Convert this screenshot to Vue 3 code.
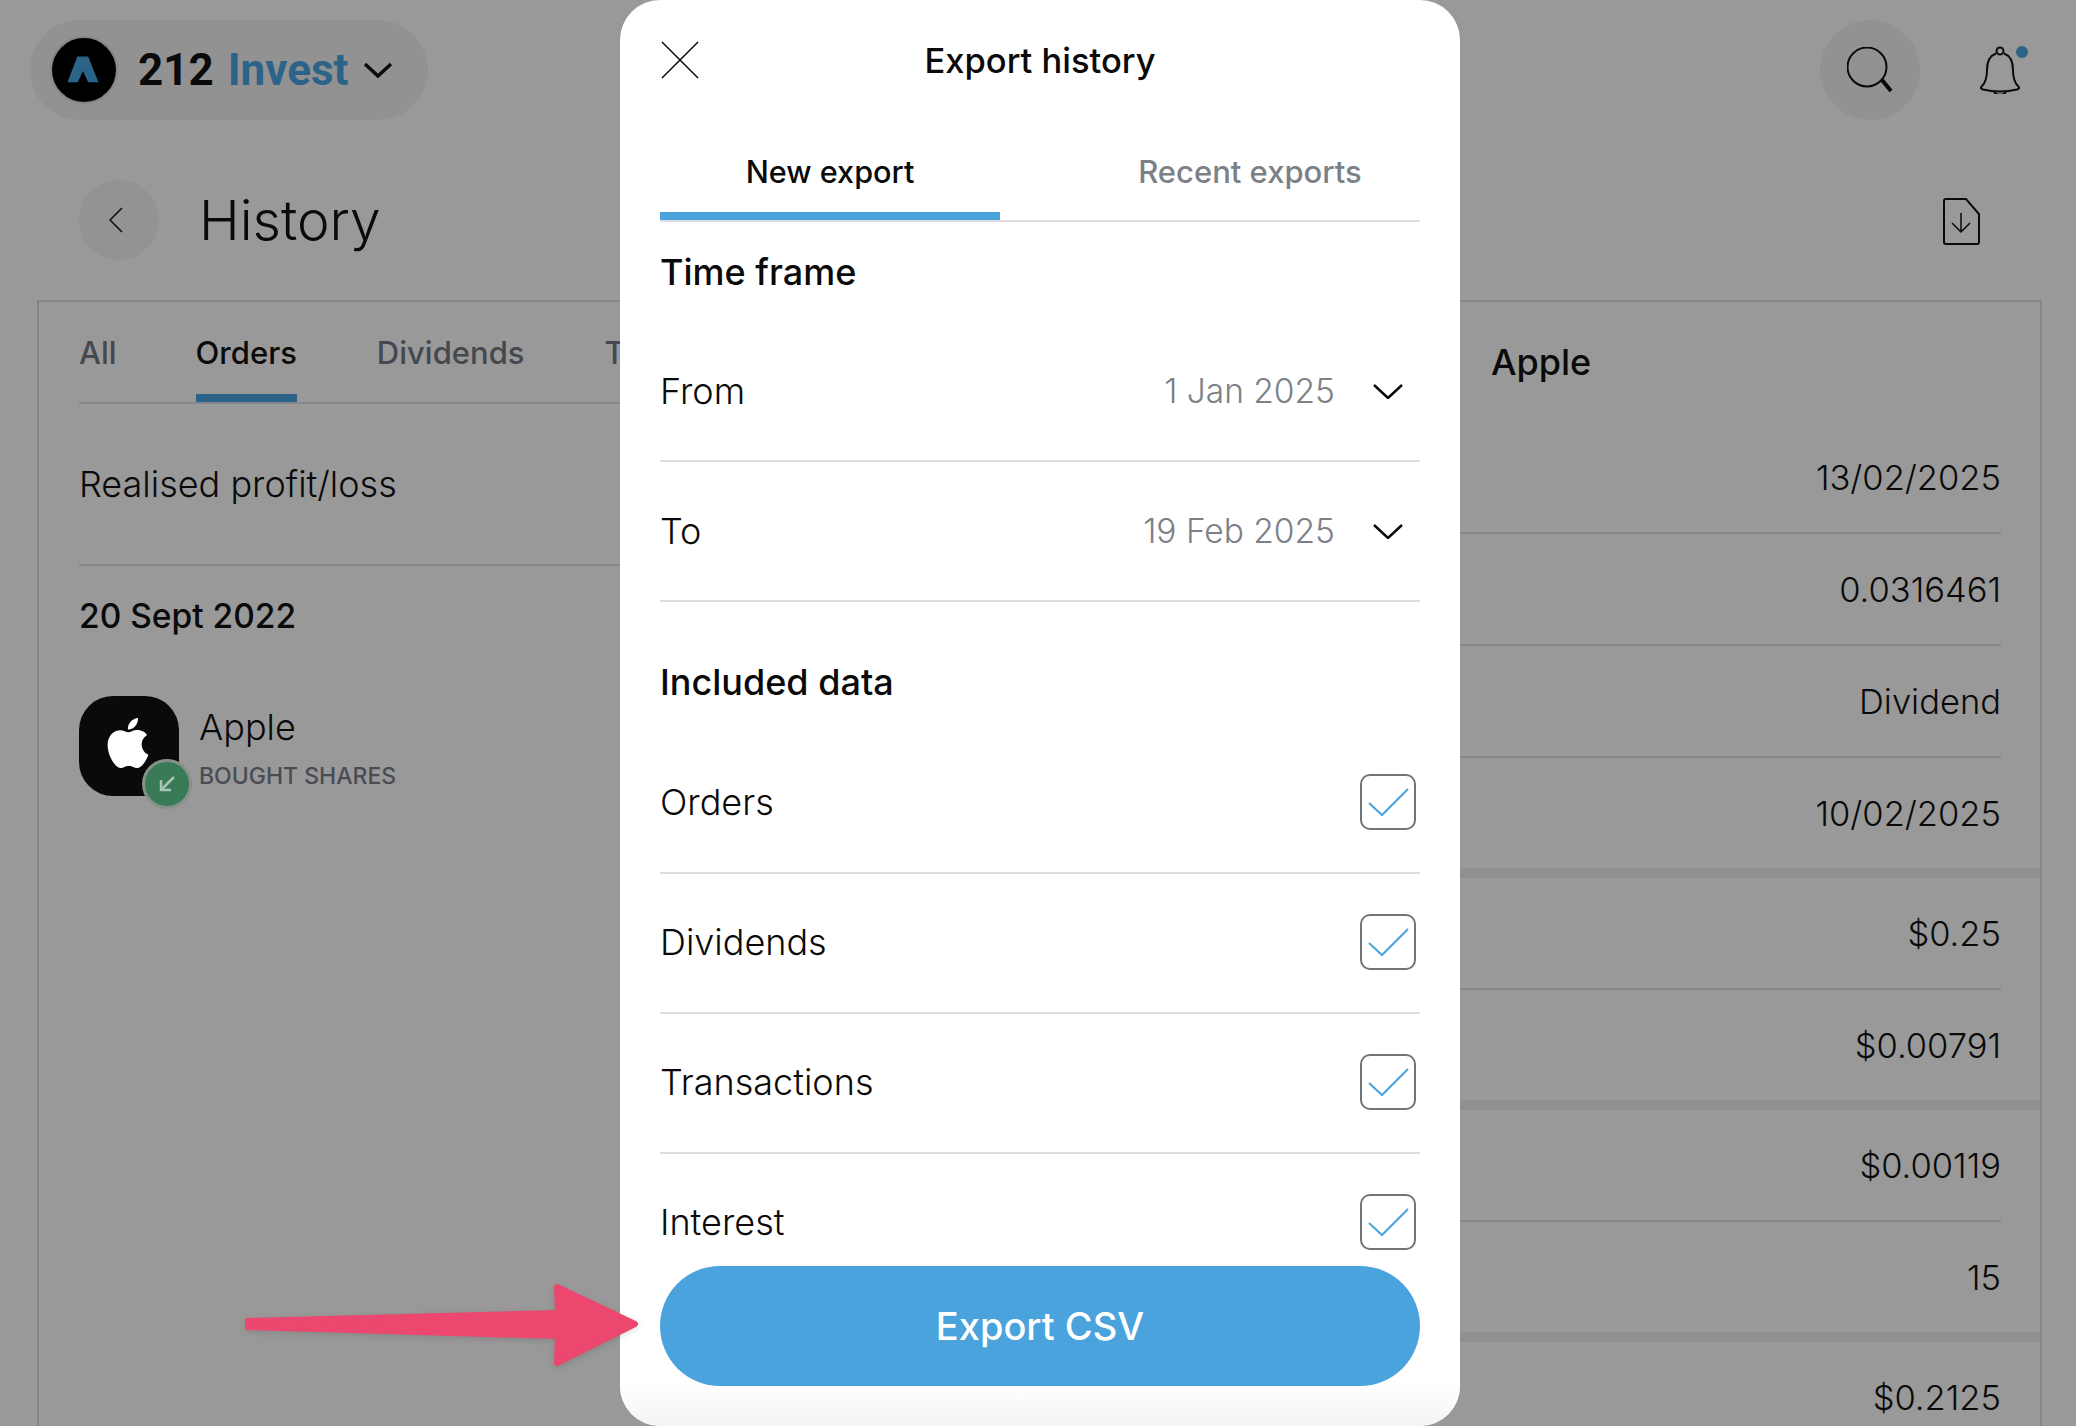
<script setup>
const timeRows = [
  { label: 'From', value: '1 Jan 2025' },
  { label: 'To', value: '19 Feb 2025' }
]
const dataRows = ['Orders', 'Dividends', 'Transactions', 'Interest']
const groups = [
  ['13/02/2025', '0.0316461', 'Dividend', '10/02/2025'],
  ['$0.25', '$0.00791'],
  ['$0.00119', '15'],
  ['$0.2125']
]
</script>

<template>
  <div class="page">
    <header class="topbar">
      <div class="brand">
        <svg class="logo" viewBox="0 0 66 66">
          <circle cx="33" cy="33" r="32" fill="#000" stroke="#85858d" stroke-width="2" />
          <path d="M26.500 20H37l10 25H37l-5-11-5 11H17z" fill="#2c6389" />
        </svg>
        <span class="brand-name">212 <em>Invest</em></span>
        <svg class="brand-chev" viewBox="0 0 30 16"><path d="M2 2l13 12L28 2" /></svg>
      </div>
      <div class="top-actions">
        <div class="search">
          <svg viewBox="0 0 46 46" width="46" height="46" fill="none" stroke="#0a0a0a">
            <circle cx="20" cy="20" r="19.500" stroke-width="2" />
            <path d="M35 33l9 11" stroke-width="4" />
          </svg>
        </div>
        <div class="bell">
          <svg viewBox="0 0 40 48" width="40" height="48" fill="none" stroke="#0a0a0a" stroke-width="2">
            <circle cx="20" cy="5" r="3.500" />
            <path d="M16 7.500C9 10 7 16 7 24c0 9-2 13-5 16-2 2-1 3 1 3.500 11 2.500 23 2.500 34 0 2-.5 3-1.500 1-3.500-3-3-5-7-5-16 0-8-2-14-9-16.500" />
            <path d="M14 45c1 5 11 5 12 0" />
          </svg>
          <i class="bell-dot"></i>
        </div>
      </div>
    </header>

    <div class="title-row">
      <div class="title-left">
        <button class="back">
          <svg viewBox="0 0 14 26" width="14" height="26"><path d="M13 1L1 13l12 12" /></svg>
        </button>
        <h1>History</h1>
      </div>
      <svg class="file-icon" viewBox="0 0 38 47" width="38" height="47" fill="none" stroke="#0a0a0a">
        <path d="M4 1h20l13 15v28a2 2 0 0 1-2 2H4a2 2 0 0 1-2-2V3a2 2 0 0 1 2-2z" stroke-width="2" />
        <path d="M19 15v19M10 25l9 9 9-9" stroke-width="1.500" />
      </svg>
    </div>

    <section class="panel">
      <div class="left-col">
        <nav class="tabs">
          <span>All</span>
          <span class="active">Orders</span>
          <span>Dividends</span>
          <span>Transactions</span>
        </nav>
        <div class="profit">Realised profit/loss</div>
        <div class="date">20 Sept 2022</div>
        <div class="stock">
          <div class="stock-icon">
            <svg class="apple" viewBox="0 0 24 24" width="50" height="50" fill="#fff">
              <path d="M12.152 6.896c-.948 0-2.415-1.078-3.960-1.040-2.040.027-3.910 1.183-4.961 3.014-2.117 3.675-.546 9.103 1.519 12.090 1.013 1.454 2.208 3.090 3.792 3.039 1.520-.065 2.090-.987 3.935-.987 1.831 0 2.350.987 3.960.948 1.637-.026 2.676-1.480 3.676-2.948 1.156-1.688 1.636-3.325 1.662-3.415-.039-.013-3.182-1.221-3.220-4.857-.026-3.040 2.480-4.494 2.597-4.559-1.429-2.090-3.623-2.324-4.390-2.376-2-.156-3.675 1.090-4.610 1.090zM15.530 3.830c.843-1.012 1.400-2.427 1.245-3.830-1.207.052-2.662.805-3.532 1.818-.780.896-1.454 2.338-1.273 3.714 1.338.104 2.715-.688 3.559-1.701" />
            </svg>
            <span class="badge">
              <svg viewBox="0 0 20 20" width="20" height="20" fill="none" stroke="#a9c4b3" stroke-width="2.500">
                <path d="M17 3L4 16M4 6v10h10" />
              </svg>
            </span>
          </div>
          <div class="stock-text">
            <div class="stock-name">Apple</div>
            <div class="stock-sub">BOUGHT SHARES</div>
          </div>
        </div>
      </div>

      <div class="right-col">
        <div class="right-head">Apple</div>
        <div v-for="(group, i) in groups" :key="i" class="group">
          <div v-for="val in group" :key="val" class="val-row">{{ val }}</div>
        </div>
      </div>
    </section>

    <div class="modal">
      <div class="modal-head">
        <svg class="close" viewBox="0 0 38 38" width="38" height="38"><path d="M1 1l36 36M37 1L1 37" /></svg>
        <h2>Export history</h2>
      </div>
      <div class="modal-tabs">
        <span class="on">New export</span>
        <span>Recent exports</span>
      </div>
      <div class="modal-body">
        <h3 class="time-head">Time frame</h3>
        <div v-for="row in timeRows" :key="row.label" class="row time-row">
          <span>{{ row.label }}</span>
          <div class="row-right">
            <span class="row-val">{{ row.value }}</span>
            <svg class="chev" viewBox="0 0 30 15" width="30" height="15"><path d="M1 1l14 13L29 1" /></svg>
          </div>
        </div>
        <h3 class="data-head">Included data</h3>
        <div v-for="name in dataRows" :key="name" class="row">
          <span>{{ name }}</span>
          <span class="check">
            <svg viewBox="0 0 56 56" width="56" height="56" fill="none">
              <rect x="1" y="1" width="54" height="54" rx="9" stroke="#70757a" stroke-width="2" />
              <path d="M9 29l13 12 26-26" stroke="#4aa3dc" stroke-width="2" />
            </svg>
          </span>
        </div>
      </div>
      <div class="modal-foot">
        <button class="export">Export CSV</button>
      </div>
    </div>

    <svg class="arrow" viewBox="0 0 410 100" width="410" height="100">
      <path d="M12 41L322 33 321 7 399 44 321 83 322 56 12 47z" fill="#ec476e" stroke="#ec476e" stroke-width="6" stroke-linejoin="round" />
    </svg>
  </div>
</template>

<style>
body {
  margin: 0;
  background: #999;
}
</style>

<style scoped>
.page {
  position: relative;
  width: 2076px;
  height: 1426px;
  overflow: hidden;
  background: #999;
  color: #0a0a0a;
  font-family: Inter, "Liberation Sans", sans-serif;
}

.topbar {
  display: flex;
  justify-content: space-between;
  align-items: flex-start;
  padding: 20px 56px 0 30px;
}

.brand {
  display: flex;
  align-items: center;
  width: 398px;
  height: 100px;
  box-sizing: border-box;
  padding-left: 20px;
  border-radius: 50px;
  background: #929292;
}

.logo {
  width: 68px;
  height: 68px;
  margin-right: 20px;
}

.brand-name {
  font-family: Roboto, sans-serif;
  font-size: 44px;
  font-weight: 700;
  word-spacing: 3px;
  white-space: pre;
}

.brand-name em {
  font-style: normal;
  color: #2c6389;
}

.brand-chev {
  width: 30px;
  height: 16px;
  margin-left: 15px;
  fill: none;
  stroke: #0a0a0a;
  stroke-width: 3.5;
}

.top-actions {
  display: flex;
  align-items: center;
  gap: 60px;
}

.search {
  display: flex;
  align-items: center;
  justify-content: center;
  width: 100px;
  height: 100px;
  border-radius: 50%;
  background: #929292;
}

.bell {
  position: relative;
  width: 40px;
  height: 48px;
}

.bell-dot {
  position: absolute;
  top: 0;
  right: -8px;
  width: 12px;
  height: 12px;
  border-radius: 50%;
  background: #2c6389;
}

.title-row {
  display: flex;
  justify-content: space-between;
  align-items: center;
  height: 80px;
  margin-top: 60px;
  padding: 0 96px 0 79px;
}

.title-left {
  display: flex;
  align-items: center;
  gap: 40px;
}

.back {
  display: flex;
  align-items: center;
  justify-content: center;
  width: 80px;
  height: 80px;
  padding: 0 6px 0 0;
  border: 0;
  border-radius: 50%;
  background: #939393;
}

.back path,
.close path,
.chev path {
  fill: none;
  stroke: #0a0a0a;
  stroke-width: 1.5;
}

.chev path {
  stroke-width: 2.5;
}

h1 {
  margin: 0;
  font-size: 55px;
  font-weight: 300;
}

.file-icon {
  margin-top: 2px;
}

.panel {
  display: grid;
  grid-template-columns: 1360px 1fr;
  margin: 40px 34px 0 37px;
  height: 1200px;
  border: 2px solid #85858d;
}

.left-col {
  padding-left: 40px;
}

.tabs {
  display: flex;
  gap: 80px;
  height: 100px;
  margin-left: 0;
  border-bottom: 2px solid #85858d;
  font-size: 31px;
  font-weight: 500;
  color: #45484e;
  white-space: nowrap;
}

.tabs span {
  position: relative;
  height: 100px;
  box-sizing: border-box;
  padding-top: 32px;
}

.tabs .active {
  margin-left: -1px;
  color: #0a0a0a;
  border-bottom: 8px solid #2c6389;
  border-radius: 4px 4px 0 0;
}

.profit {
  display: flex;
  align-items: center;
  height: 160px;
  border-bottom: 2px solid #85858d;
  font-size: 36px;
  font-weight: 300;
}

.date {
  padding-top: 28px;
  font-size: 33.500px;
  font-weight: 500;
  line-height: 44px;
}

.stock {
  display: flex;
  gap: 20px;
  margin-top: 58px;
}

.stock-icon {
  position: relative;
  display: flex;
  align-items: center;
  justify-content: center;
  width: 100px;
  height: 100px;
  border-radius: 34px;
  background: #0a0a0a;
}

.apple {
  margin: -6px 0 0 -2px;
}

.badge {
  position: absolute;
  left: 63px;
  top: 63px;
  display: flex;
  align-items: center;
  justify-content: center;
  width: 44px;
  height: 44px;
  border: 3px solid #85908a;
  border-radius: 50%;
  background: #397b56;
}

.stock-text {
  padding-top: 9px;
}

.stock-name {
  font-size: 36px;
  font-weight: 300;
  line-height: 44px;
}

.stock-sub {
  margin-top: 11px;
  font-size: 23px;
  font-weight: 500;
  color: #4a4c54;
  line-height: 32px;
}

.right-head {
  height: 120px;
  box-sizing: border-box;
  padding: 37px 0 0 92px;
  font-size: 36px;
  font-weight: 500;
  line-height: 46px;
}

.group {
  border-bottom: 10px solid #909090;
}

.val-row {
  display: flex;
  align-items: center;
  justify-content: flex-end;
  height: 110px;
  margin-right: 39px;
  border-bottom: 2px solid #85858a;
  font-size: 34.500px;
  font-weight: 300;
}

.val-row:last-child {
  border-bottom: 0;
}

.modal {
  position: absolute;
  left: 620px;
  top: 0;
  display: flex;
  flex-direction: column;
  width: 840px;
  height: 1426px;
  border-radius: 40px;
  background: #fff;
  overflow: hidden;
}

.modal-head {
  position: relative;
  display: flex;
  align-items: center;
  justify-content: center;
  height: 120px;
  flex: none;
}

.close {
  position: absolute;
  left: 41px;
  top: 41px;
}

h2 {
  margin: 0;
  font-size: 34.500px;
  font-weight: 500;
}

.modal-tabs {
  display: flex;
  justify-content: space-between;
  flex: none;
  height: 100px;
  margin: 0 40px;
  border-bottom: 2px solid #dcdce2;
  font-size: 31px;
  font-weight: 500;
  color: #7c8087;
}

.modal-tabs span {
  width: 340px;
  height: 100px;
  box-sizing: border-box;
  padding-top: 33px;
  text-align: center;
}

.modal-tabs .on {
  color: #0a0a0a;
  font-size: 30.600px;
  border-bottom: 8px solid #4aa3dc;
  border-radius: 4px 4px 0 0;
}

.modal-body {
  flex: 1;
  min-height: 0;
  padding: 0 40px;
  overflow: hidden;
}

h3 {
  margin: 0;
  font-size: 36px;
  font-weight: 500;
  line-height: 46px;
}

.time-head {
  padding-top: 27px;
  height: 73px;
}

.data-head {
  box-sizing: border-box;
  height: 132px;
  padding-top: 57px;
}

.row {
  display: flex;
  justify-content: space-between;
  align-items: center;
  height: 136px;
  padding-bottom: 2px;
  border-bottom: 2px solid #dcdce2;
  font-size: 36px;
  font-weight: 300;
}

.time-row {
  height: 138px;
  padding-bottom: 0;
}

.row-right {
  display: flex;
  align-items: center;
  gap: 38px;
  padding-right: 17px;
}

.row-val {
  font-size: 33.500px;
  color: #7c8087;
}

.check {
  display: flex;
  margin-right: 4px;
}

.modal-foot {
  flex: none;
  height: 160px;
  box-sizing: border-box;
  padding: 0 40px;
  background: linear-gradient(to bottom, #fff 75%, #f4f4f4 100%);
}

.export {
  width: 100%;
  height: 120px;
  border: 0;
  border-radius: 60px;
  background: #4aa3dc;
  color: #fff;
  font-family: inherit;
  font-size: 38px;
  font-weight: 500;
}

.arrow {
  position: absolute;
  left: 236px;
  top: 1280px;
  filter: drop-shadow(0 2px 3px rgba(0, 0, 0, 0.12));
}
</style>
